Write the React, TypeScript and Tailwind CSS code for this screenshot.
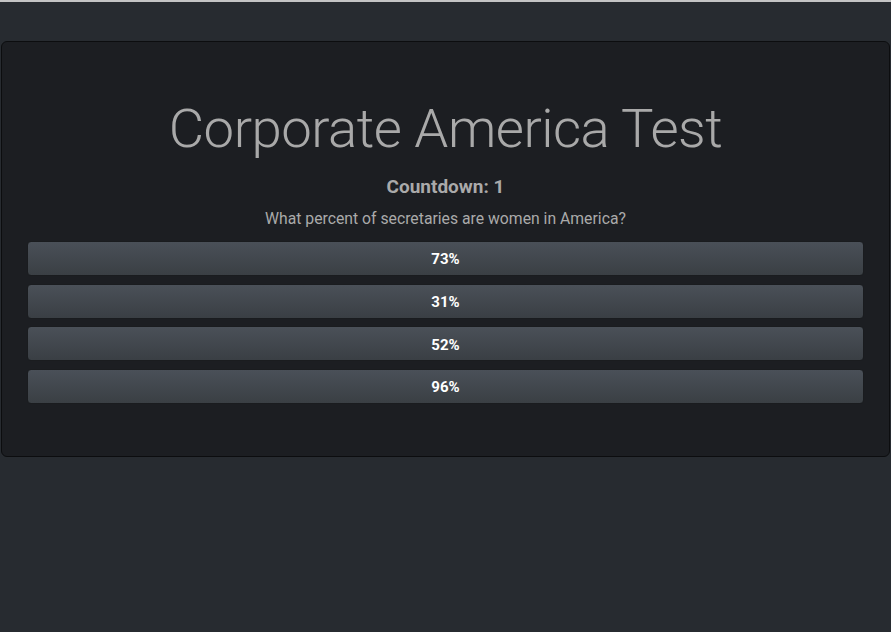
const answers = ["73%", "31%", "52%", "96%"];

const App = () => {
  return (
    <div className="min-h-[632px] bg-[#272b30] font-['Roboto',sans-serif] text-[#aaaaaa]">
      <div className="h-[2px] bg-[#c4c4c4]" />
      <div className="pt-[39px] px-[1px]">
        <div className="rounded-md border border-[#0c0d0f] bg-[#1c1e22] px-[25px] pt-[51px] pb-[52px]">
          <h1 className="text-center text-[54.5px] font-light leading-[70px] tracking-[-0.5px] text-[#a9a9a9]">
            Corporate America Test
          </h1>
          <h5 className="mt-[14px] text-center text-[19px] font-bold leading-[20px]">
            Countdown: 1
          </h5>
          <p className="mt-[12px] text-center text-[15.75px] leading-[20px]">
            What percent of secretaries are women in America?
          </p>
          <div className="mt-[12px] flex flex-col gap-[7.67px]">
            {answers.map((a) => (
              <button
                key={a}
                className="h-[35px] w-full rounded-[4px] border border-[#1a1c1f] bg-gradient-to-b from-[#4a5058] to-[#3a3f44] pt-[2px] text-[15px] font-bold text-white"
              >
                {a}
              </button>
            ))}
          </div>
        </div>
      </div>
    </div>
  );
};

export default App;
